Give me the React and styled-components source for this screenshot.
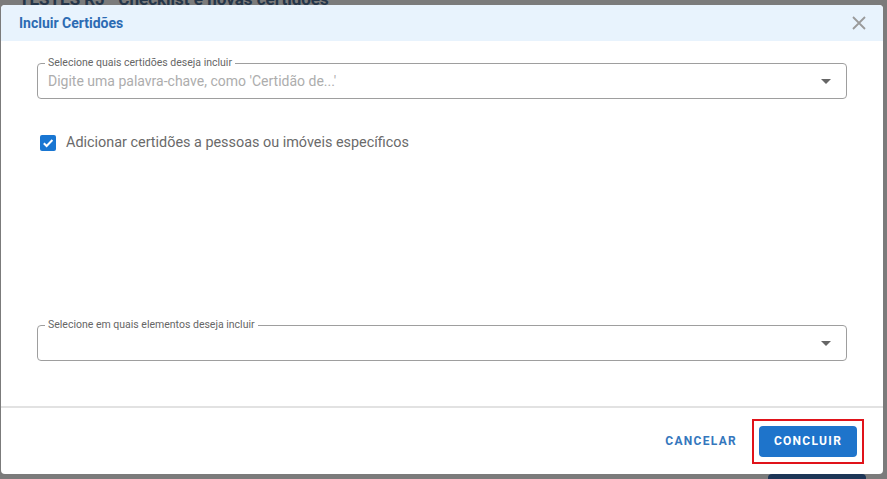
import styled, { createGlobalStyle } from 'styled-components';

const GlobalStyle = createGlobalStyle`
    html, body {
        margin: 0;
        padding: 0;
        width: 887px;
        height: 479px;
        overflow: hidden;
        font-family: Roboto, "Liberation Sans", Arial, sans-serif;
    }
`;

// the page that lies behind the modal, already dimmed
const Page = styled.div`
    position: relative;
    display: flex;
    flex-direction: column;
    width: 887px;
    height: 479px;
    overflow: hidden;
    background-color: #7b7b7b;

    > h2 {
        margin: -11px 0 0;
        padding-left: 19px;
        color: #25364a;
        font-size: 17px;
        font-weight: 700;
        line-height: 20px;
    }

    > .footer {
        display: flex;
        justify-content: flex-end;
        margin-top: auto;
        margin-bottom: -26px;
        padding-right: 21px;

        > span {
            width: 98px;
            height: 31px;
            border-radius: 4px;
            background-color: #1d3657;
        }
    }
`;

const Dialog = styled.div`
    position: absolute;
    top: 5px;
    left: 1px;
    display: flex;
    flex-direction: column;
    width: 882px;
    height: 469px;
    border-radius: 4px;
    background-color: #fff;
    overflow: hidden;
`;

const Header = styled.header`
    display: flex;
    align-items: center;
    justify-content: space-between;
    height: 36px;
    padding: 0 17px 0 18px;
    background-color: #e8f3fd;

    > h1 {
        margin: 0;
        color: #2c6bb3;
        font-size: 14px;
        font-weight: 700;
    }

    > button {
        display: flex;
        padding: 0;
        border: none;
        background: none;
    }
`;

const Body = styled.div`
    display: flex;
    flex-direction: column;
    flex: 1;
    padding: 22px 36px 45px 36px;
    border-bottom: 2px solid #e2e2e2;
`;

const Field = styled.div`
    position: relative;
    display: flex;
    align-items: center;
    height: 36px;
    padding: 0 15px 0 10px;
    border: 1px solid #9e9e9e;
    border-radius: 4px;
    box-sizing: border-box;

    // the label sits on the top border
    > label {
        position: absolute;
        top: -7px;
        left: 7px;
        padding: 0 3px;
        background-color: #fff;
        color: #666;
        font-size: 10.5px;
        line-height: 12px;
    }

    > .value {
        flex: 1;
        color: #adadad;
        font-size: 14px;
    }

    > .arrow {
        width: 0;
        height: 0;
        border-left: 5px solid transparent;
        border-right: 5px solid transparent;
        border-top: 5px solid #666;
    }
`;

const CheckRow = styled.label`
    display: flex;
    align-items: center;
    gap: 10px;
    margin: 35px 0 0 3px;
    color: #6a6a6a;
    font-size: 14.4px;

    > span {
        display: flex;
        align-items: center;
        justify-content: center;
        width: 16px;
        height: 16px;
        border-radius: 2px;
        background-color: #1976d2;
    }
`;

const Spacer = styled.div`
    flex: 1;
`;

const Footer = styled.footer`
    display: flex;
    align-items: center;
    justify-content: flex-end;
    gap: 15px;
    height: 66px;
    padding-right: 19px;
`;

const Button = styled.button`
    width: ${({ $primary }) => ($primary ? '98px' : 'auto')};
    height: 31px;
    padding: 0;
    border: none;
    border-radius: 4px;
    background-color: ${({ $primary }) => ($primary ? '#1e74cb' : 'transparent')};
    color: ${({ $primary }) => ($primary ? '#fff' : '#3577bd')};
    font-family: Roboto, "Liberation Sans", Arial, sans-serif;
    font-size: 12px;
    font-weight: 700;
    letter-spacing: 1.3px;
`;

// red highlight drawn around the confirm button
const Highlight = styled.div`
    display: flex;
    padding: 5px;
    border: 2px solid #e0131a;
`;

const App = () => {
    return (
        <>
            <GlobalStyle />
            <Page>
                <h2>TESTES RJ · Checklist e novas certidões</h2>
                <div className="footer"><span /></div>

                <Dialog>
                    <Header>
                        <h1>Incluir Certidões</h1>
                        <button type="button" aria-label="Fechar">
                            <svg width="14" height="14" viewBox="0 0 14 14">
                                <path d="M1 1 L13 13 M13 1 L1 13" stroke="#9a9a9a" strokeWidth="1.8" />
                            </svg>
                        </button>
                    </Header>

                    <Body>
                        <Field>
                            <label>Selecione quais certidões deseja incluir</label>
                            <span className="value">Digite uma palavra-chave, como 'Certidão de...'</span>
                            <span className="arrow" />
                        </Field>

                        <CheckRow>
                            <span>
                                <svg width="12" height="12" viewBox="0 0 12 12">
                                    <path d="M1.8 6.2 L4.6 9 L10.4 3" fill="none" stroke="#fff" strokeWidth="2" />
                                </svg>
                            </span>
                            Adicionar certidões a pessoas ou imóveis específicos
                        </CheckRow>

                        <Spacer />

                        <Field>
                            <label>Selecione em quais elementos deseja incluir</label>
                            <span className="value" />
                            <span className="arrow" />
                        </Field>
                    </Body>

                    <Footer>
                        <Button type="button">CANCELAR</Button>
                        <Highlight>
                            <Button type="button" $primary>CONCLUIR</Button>
                        </Highlight>
                    </Footer>
                </Dialog>
            </Page>
        </>
    );
};

export default App;
